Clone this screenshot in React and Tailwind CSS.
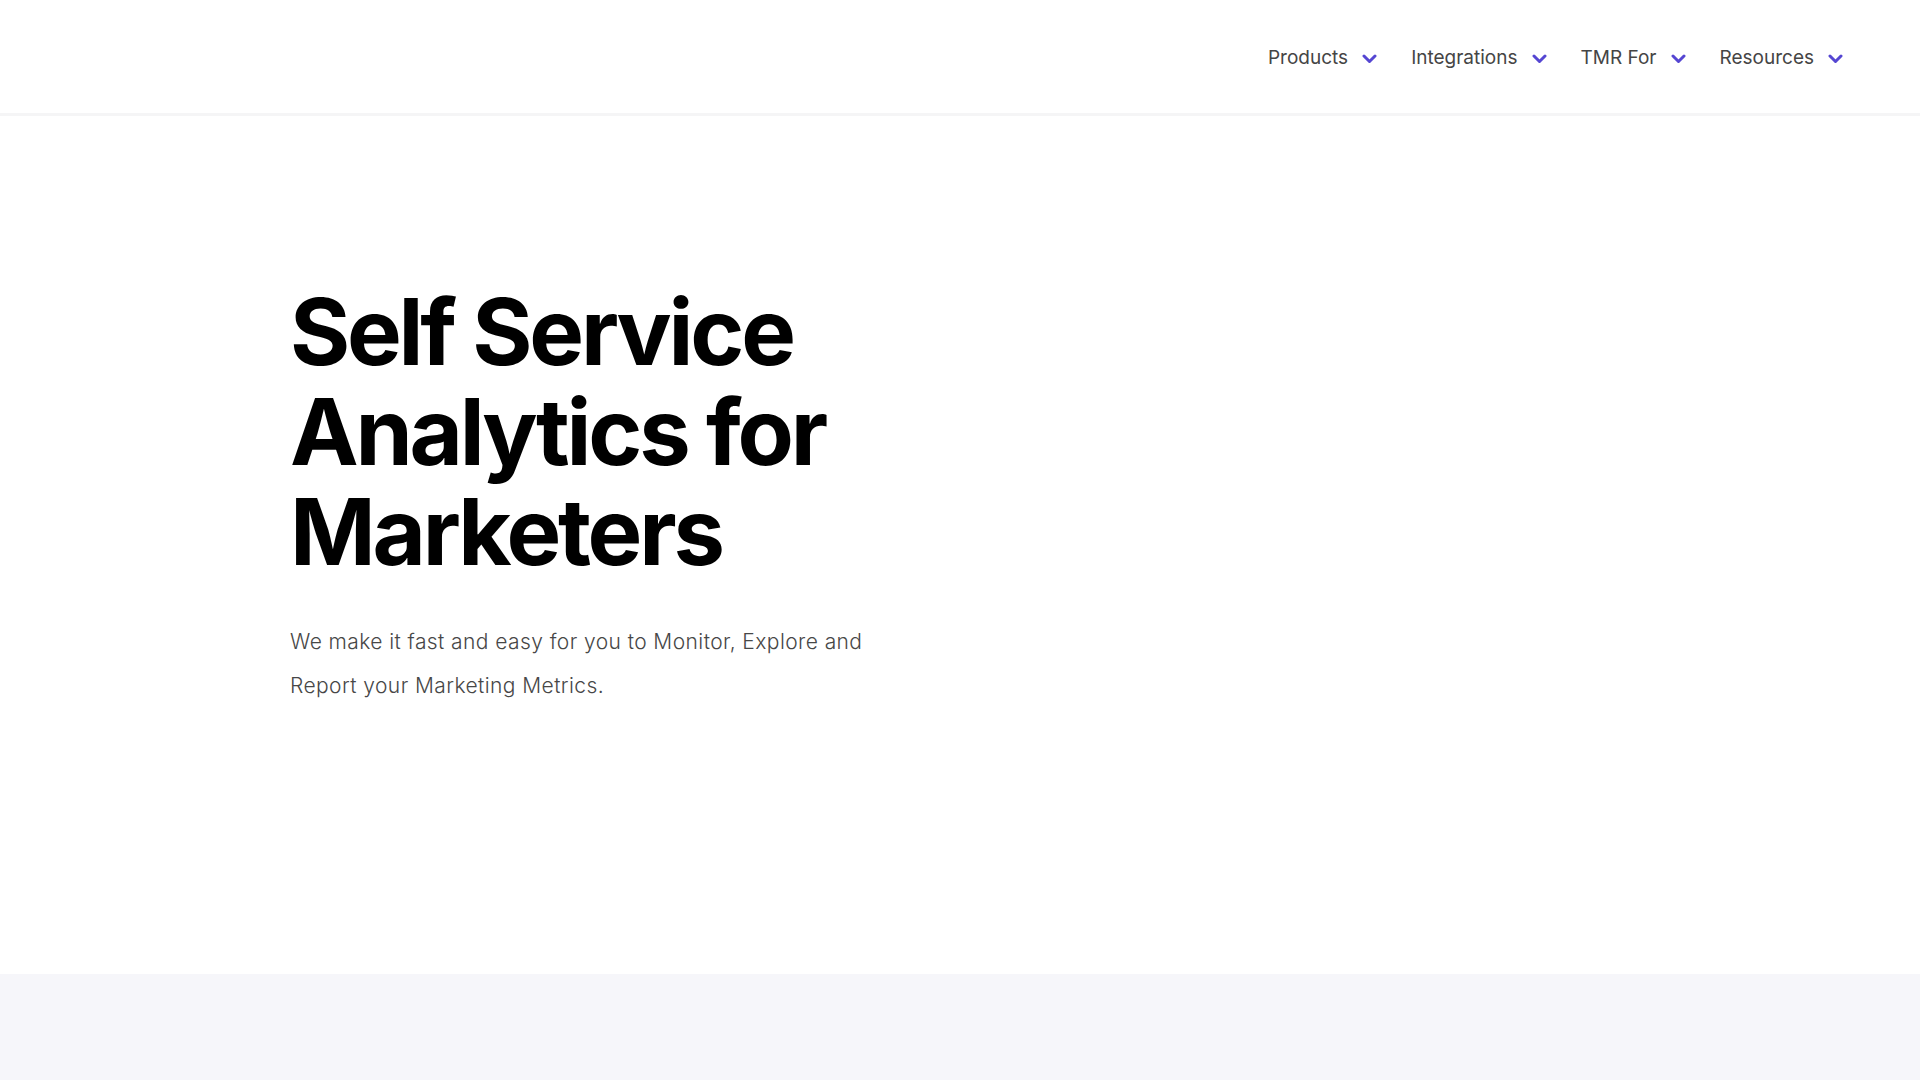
import React from "react";

const navItems = ["Products", "Integrations", "TMR For", "Resources"];

function Chevron() {
  return (
    <svg width="15" height="10" viewBox="0 0 15 10" className="shrink-0">
      <path
        d="M2 2 L7.5 7.5 L13 2"
        fill="none"
        stroke="#5546d2"
        strokeWidth="3"
        strokeLinecap="round"
        strokeLinejoin="round"
      />
    </svg>
  );
}

export default function App() {
  return (
    <div className="min-h-screen bg-white font-['Inter',sans-serif]">

      {/* Header */}

      <header className="h-[116px] border-b-[3px] border-[#f5f5f6] flex items-center justify-end pr-[77px]">
        <nav className="flex items-center gap-[34px] mt-[4px]">
          {navItems.map((item) => (
            <div key={item} className="flex items-center gap-[14px] cursor-pointer">
              <span className="text-[19px] text-[#454545]">
                {item}
              </span>
              <Chevron />
            </div>
          ))}
        </nav>
      </header>

      {/* Hero */}

      <section className="h-[858px] bg-white">
        <div className="pl-[290px] pt-[166px]">
          <h1 className="text-[92px] leading-[100px] font-bold text-black tracking-[-0.035em] w-[640px]">
            Self Service Analytics for Marketers
          </h1>

          <p className="mt-[38px] text-[21px] leading-[44px] font-light text-[#474747] w-[600px] tracking-[0.02em]">
            We make it fast and easy for you to Monitor, Explore and Report your
            Marketing Metrics.
          </p>
        </div>
      </section>

      {/* Next section */}

      <section className="h-[200px] bg-[#f6f6fa]" />
    </div>
  );
}
